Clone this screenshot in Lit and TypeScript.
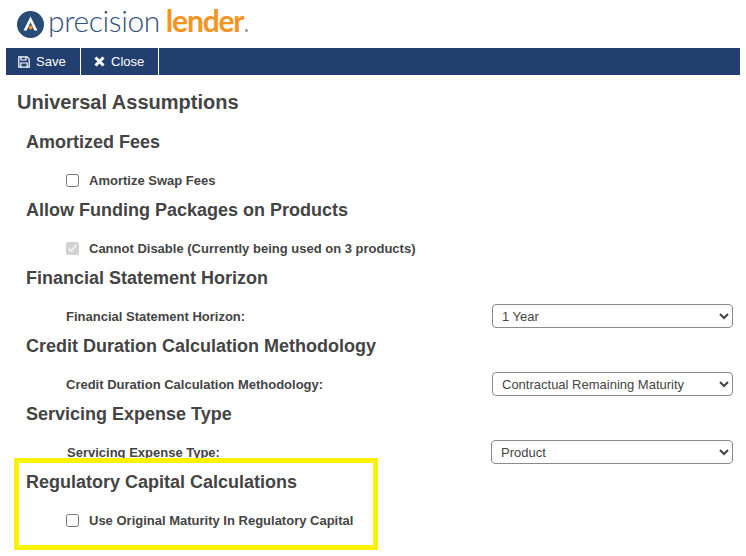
import { LitElement, html, css } from "lit";
import { customElement } from "lit/decorators.js";

type Row = { head: string; label: string; kind: "check" | "locked" | "select"; value?: string; shift?: boolean };

const rows: Row[] = [
  { head: "Amortized Fees", label: "Amortize Swap Fees", kind: "check" },
  { head: "Allow Funding Packages on Products", label: "Cannot Disable (Currently being used on 3 products)", kind: "locked" },
  { head: "Financial Statement Horizon", label: "Financial Statement Horizon:", kind: "select", value: "1 Year" },
  { head: "Credit Duration Calculation Methodology", label: "Credit Duration Calculation Methodology:", kind: "select", value: "Contractual Remaining Maturity" },
  { head: "Servicing Expense Type", label: "Servicing Expense Type:", kind: "select", value: "Product", shift: true },
  { head: "Regulatory Capital Calculations", label: "Use Original Maturity In Regulatory Capital", kind: "check" },
];

@customElement("app-root")
export class AppRoot extends LitElement {
  static styles = css`
    :host { display: block; position: relative; width: 746px; height: 556px; overflow: hidden; background: #fff; font-family: "Liberation Sans", Arial, sans-serif; color: #444; }
    .logo { height: 48px; display: flex; align-items: center; padding-left: 17px; box-sizing: border-box; }
    .logo svg { display: block; flex: none; margin-right: 4px; }
    .word { font-family: Lato, "Open Sans", sans-serif; font-size: 30px; line-height: 36px; margin-top: -4px; white-space: nowrap; }
    .word .a { font-weight: 300; color: #33507c; letter-spacing: -0.4px; }
    .word .b { font-weight: 700; color: #f7931e; margin-left: 6px; letter-spacing: -1.2px; }
    .word .c { font-weight: 700; font-size: 18px; color: #8a99b0; margin-left: 1px; }
    .bar { margin: 0 6px; height: 27px; background: #223f6f; display: flex; }
    .btn { display: flex; align-items: center; gap: 6px; height: 27px; color: #fff; font-size: 13px; border-right: 1px solid #fff; box-sizing: border-box; }
    .btn.save { width: 75px; padding-left: 12px; }
    .btn.close { width: 78px; padding-left: 13px; }
    h1 { margin: 0; padding: 16px 0 0 17px; height: 38px; box-sizing: content-box; font-size: 20px; line-height: 23px; font-weight: 700; color: #444; }
    .sections { padding-left: 26px; margin-top: -5px; }
    section { height: 68px; display: flex; flex-direction: column; }
    h2 { margin: 0; padding-top: 6px; font-size: 18px; line-height: 24px; font-weight: 700; color: #444; }
    .row { display: flex; align-items: center; justify-content: space-between; height: 24px; margin-top: 14px; padding-left: 40px; padding-right: 13px; font-size: 13px; font-weight: 700; }
    .row.shift { padding-left: 41px; padding-right: 13px; }
    .chk { display: flex; align-items: center; gap: 10px; }
    .box { width: 13px; height: 13px; margin: 0; flex: none; }
    select { width: 241px; height: 24px; box-sizing: border-box; font: 13px "Liberation Sans", Arial, sans-serif; color: #444; background: #fff; border: 1px solid #8a8a8a; border-radius: 4px; padding-left: 5px; }
    .row.shift select { width: 242px; }
    .highlight { position: absolute; left: 14px; top: 458px; width: 364px; height: 92px; box-sizing: border-box; border: 5px solid #fff200; pointer-events: none; }
  `;

  private renderControl(r: Row) {
    if (r.kind === "select") {
      return html`<span>${r.label}</span><select><option>${r.value}</option></select>`;
    }
    const locked = r.kind === "locked";
    return html`<label class="chk"><input class="box" type="checkbox" ?checked=${locked} ?disabled=${locked} /><span>${r.label}</span></label>`;
  }

  render() {
    return html`
      <div class="logo">
        <svg width="27" height="27" viewBox="0 0 27 27">
          <circle cx="13.5" cy="13.5" r="13.5" fill="#2a4a78" />
          <path d="M6.5 19.5 L13.5 5.5 L20.5 19.5 L17.4 19.5 L13.5 11.2 L9.6 19.5 Z" fill="#fff" />
          <circle cx="13.7" cy="16.5" r="1.9" fill="#f7931e" />
        </svg>
        <div class="word"><span class="a">precision</span><span class="b">lender</span><span class="c">.</span></div>
      </div>
      <div class="bar">
        <div class="btn save">
          <svg width="12" height="12" viewBox="0 0 12 12" fill="none" stroke="#fff" stroke-width="1.2">
            <path d="M0.8 0.8 H9 L11.2 3 V11.2 H0.8 Z" />
            <path d="M3 0.8 V4 H8 V0.8" />
            <path d="M2.8 11.2 V7 H9.2 V11.2" />
          </svg>
          <span>Save</span>
        </div>
        <div class="btn close">
          <svg width="11" height="11" viewBox="0 0 11 11" fill="none" stroke="#fff" stroke-width="3">
            <path d="M1.5 1.5 L9.5 9.5 M9.5 1.5 L1.5 9.5" />
          </svg>
          <span>Close</span>
        </div>
      </div>
      <h1>Universal Assumptions</h1>
      <div class="sections">
        ${rows.map(
          (r) => html`<section>
            <h2>${r.head}</h2>
            <div class="row ${r.shift ? "shift" : ""}">${this.renderControl(r)}</div>
          </section>`
        )}
      </div>
      <div class="highlight"></div>
    `;
  }
}
